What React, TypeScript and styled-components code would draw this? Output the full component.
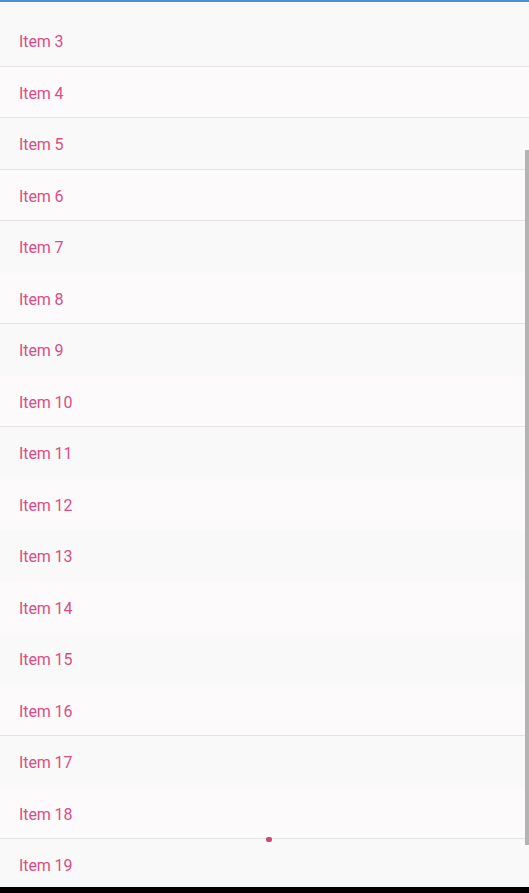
import React from 'react';
import styled, { createGlobalStyle } from 'styled-components';

const GlobalStyle = createGlobalStyle`
  html, body {
    margin: 0;
    padding: 0;
    background: #000;
  }
  body {
    font-family: Roboto, "Noto Sans", "Liberation Sans", sans-serif;
  }
`;

const Screen = styled.div`
  position: relative;
  width: 529px;
  height: 893px;
  display: flex;
  flex-direction: column;
  background: #fafafa;
  overflow: hidden;
`;

const TopLine = styled.div`
  height: 2px;
  flex: none;
  background: #4a90d9;
`;

const ListView = styled.div`
  height: 885px;
  flex: none;
  display: flex;
  flex-direction: column;
  overflow: hidden;
`;

const PartialRow = styled.div`
  height: 13px;
  flex: none;
  background: #f9f9f9;
`;

const Row = styled.div<{ $divider: boolean; $tint: boolean }>`
  height: 51.5px;
  flex: none;
  box-sizing: border-box;
  display: flex;
  align-items: center;
  padding-left: 19px;
  padding-top: 3px;
  background: ${(p) => (p.$tint ? '#fcfafb' : '#f9f9f9')};
  border-bottom: 1px solid ${(p) => (p.$divider ? '#e4e4e4' : 'transparent')};
  color: #d84e84;
  font-size: 16px;
  letter-spacing: -0.1px;
`;

const BottomBar = styled.div`
  flex: 1;
  background: #000;
`;

const ScrollThumb = styled.div`
  position: absolute;
  right: 0;
  top: 150px;
  width: 4px;
  height: 695px;
  background: #b3b3b3;
`;

const TouchDot = styled.div`
  position: absolute;
  left: 266px;
  top: 837px;
  width: 6px;
  height: 5px;
  border-radius: 2px;
  background: #d4467e;
`;

const dividers = new Set([3, 4, 5, 6, 8, 10, 16, 18]);
const items = Array.from({ length: 17 }, (_, i) => i + 3);

export default function App() {
  return (
    <>
      <GlobalStyle />
      <Screen>
        <TopLine />
        <ListView>
          <PartialRow />
          {items.map((n) => (
            <Row key={n} $divider={dividers.has(n)} $tint={n % 2 === 0}>
              Item {n}
            </Row>
          ))}
        </ListView>
        <BottomBar />
        <ScrollThumb />
        <TouchDot />
      </Screen>
    </>
  );
}
